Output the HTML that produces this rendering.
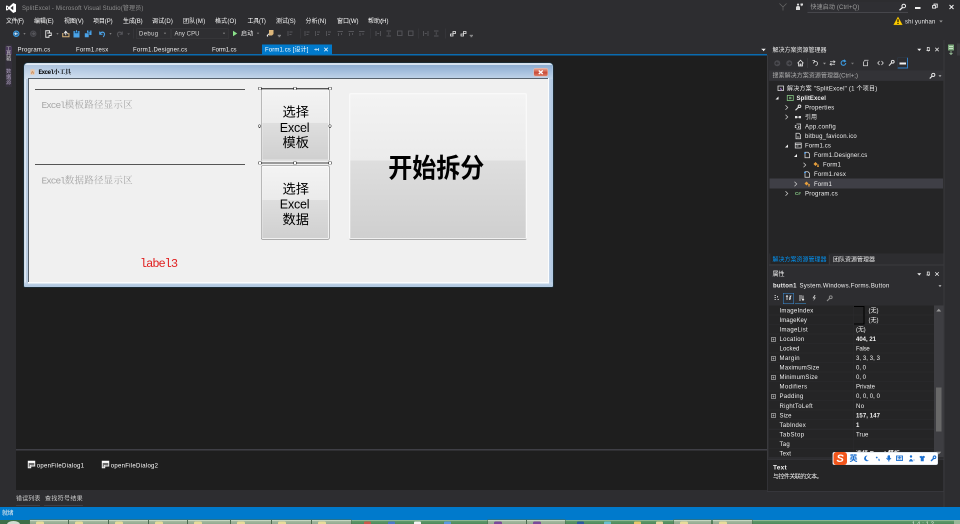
<!DOCTYPE html>
<html lang="zh-CN"><head><meta charset="utf-8"><title>SplitExcel - Microsoft Visual Studio</title>
<style>
html,body{margin:0;padding:0;background:#2d2d30;overflow:hidden;width:960px;height:524px}
#s{position:absolute;left:0;top:0;width:1920px;height:1048px;transform:scale(.5);transform-origin:0 0;font:12px/16px "Liberation Sans","Noto Sans CJK SC",sans-serif;color:#f1f1f1;overflow:hidden;background:#2d2d30;will-change:transform}
#s div,#s svg,#s span.t{position:absolute}
#s span.t{white-space:nowrap;display:block}
#s b{font-weight:bold}
</style></head>
<body><div id="s">
<div style="left:32px;top:110px;width:1502px;height:790px;background:#1e1e1e;"></div>
<div style="left:32px;top:897.6px;width:1502px;height:3.6px;background:#3f3f46;"></div>
<div style="left:32px;top:901px;width:1502px;height:79px;background:#1e1e1e;"></div>
<div style="left:1534px;top:110px;width:2px;height:870px;background:#3a3a3d;"></div>
<div style="left:32px;top:108.2px;width:1502px;height:2.4px;background:#0a6bb0;"></div>
<div style="left:524px;top:88.6px;width:140px;height:20.4px;background:#007acc;"></div>
<svg style="left:12px;top:6px;" width="20" height="20" viewBox="0 0 20 20"><path d="M14.5 0 L20 2.4 V17.6 L14.5 20 L6 12.3 L2 15.3 L0 14.3 V5.7 L2 4.7 L6 7.7 Z M14.5 5.6 L9 10 L14.5 14.4 Z M2 7.6 V12.4 L4.6 10 Z" fill="#fff" fill-rule="evenodd"/></svg>
<span class="t" style="left:44px;top:7.5px;color:#8e8e8e;letter-spacing:0.34px;">SplitExcel - Microsoft Visual Studio(管理员)</span>
<div style="left:1615px;top:4px;width:201px;height:21.4px;background:#2f2f33;"></div>
<div style="left:1615px;top:24px;width:201px;height:1.6px;background:#46464b;"></div>
<span class="t" style="left:1621px;top:6.1px;color:#a0a0a0;letter-spacing:0.28px;">快速启动 (Ctrl+Q)</span>
<svg style="left:1558px;top:6px;" width="16" height="16" viewBox="0 0 16 16"><path d="M1 1 L8 8 L15 1 M8 8 V15" stroke="#6a6a6a" stroke-width="1.3" fill="none"/></svg>
<svg style="left:1590px;top:6px;" width="16" height="16" viewBox="0 0 16 16"><path d="M2 14 V9 Q2 6 6 6 Q10 6 10 9 V14 Z M6 1 a2.2 2.2 0 1 0 .01 0 M11 1 h5 v4 h-2 l-1.5 2 v-2 h-1.5z" fill="#ddd"/></svg>
<svg style="left:1797px;top:7px;" width="16" height="14" viewBox="0 0 16 14"><circle cx="10.5" cy="5" r="3.6" stroke="#f1f1f1" stroke-width="2" fill="none"/><path d="M8 8 L2 13.5" stroke="#f1f1f1" stroke-width="2.6"/></svg>
<div style="left:1830px;top:13.6px;width:11px;height:4px;background:#f1f1f1;"></div>
<svg style="left:1863px;top:7px;" width="14" height="12" viewBox="0 0 14 12"><path d="M5 3 V1.2 H11.5 V7.5 H9.5" stroke="#f1f1f1" stroke-width="1.8" fill="none"/><rect x="2.2" y="4.2" width="6" height="5" stroke="#f1f1f1" stroke-width="1.8" fill="#2d2d30"/></svg>
<svg style="left:1898px;top:9px;" width="10" height="10" viewBox="0 0 10 10"><path d="M1 1 L9 9 M9 1 L1 9" stroke="#f1f1f1" stroke-width="2"/></svg>
<svg style="left:1787px;top:33px;" width="18" height="18" viewBox="0 0 18 18"><path d="M9 0.8 L17.6 16.6 H0.4 Z" fill="#ffcc00" stroke="#e8b800" stroke-width="0.8"/><path d="M9 5.5 V11.5 M9 13 V15" stroke="#000" stroke-width="2.2"/></svg>
<span class="t" style="left:1810px;top:34.9px;color:#ececec;letter-spacing:0.30px;">shi yunhan</span>
<svg style="left:1878px;top:40px;" width="8" height="6" viewBox="0 0 8 6"><path d="M0.5 1 L4 5 L7.5 1Z" fill="#999"/></svg>
<span class="t" style="left:12px;top:34.3px;color:#ffffff;letter-spacing:-0.87px;">文件(F)</span>
<span class="t" style="left:68px;top:34.3px;color:#ffffff;letter-spacing:-0.20px;">编辑(E)</span>
<span class="t" style="left:128px;top:34.3px;color:#ffffff;letter-spacing:-0.20px;">视图(V)</span>
<span class="t" style="left:186px;top:34.3px;color:#ffffff;letter-spacing:-0.20px;">项目(P)</span>
<span class="t" style="left:246px;top:34.3px;color:#ffffff;letter-spacing:-0.20px;">生成(B)</span>
<span class="t" style="left:304px;top:34.3px;color:#ffffff;letter-spacing:0.27px;">调试(D)</span>
<span class="t" style="left:366px;top:34.3px;color:#ffffff;letter-spacing:0.60px;">团队(M)</span>
<span class="t" style="left:430px;top:34.3px;color:#ffffff;letter-spacing:0.33px;">格式(O)</span>
<span class="t" style="left:495px;top:34.3px;color:#ffffff;letter-spacing:-0.67px;">工具(T)</span>
<span class="t" style="left:552px;top:34.3px;color:#ffffff;letter-spacing:-0.20px;">测试(S)</span>
<span class="t" style="left:611px;top:34.3px;color:#ffffff;letter-spacing:0.27px;">分析(N)</span>
<span class="t" style="left:674px;top:34.3px;color:#ffffff;letter-spacing:-0.07px;">窗口(W)</span>
<span class="t" style="left:736px;top:34.3px;color:#ffffff;letter-spacing:0.07px;">帮助(H)</span>
<svg style="left:26px;top:61px;" width="13" height="13" viewBox="0 0 13 13"><circle cx="6.5" cy="6.5" r="5.4" stroke="#3b9ae0" stroke-width="2.2" fill="#1b4f7a"/><path d="M9.6 6.5 H4 M6.4 3.8 L3.6 6.5 L6.4 9.2" stroke="#cfe6fa" stroke-width="1.8" fill="none"/></svg>
<svg style="left:46px;top:66px;" width="6" height="4" viewBox="0 0 6 4"><path d="M0.8 0.5 H5.2 L3 3.2Z" fill="#999"/></svg>
<svg style="left:60px;top:61px;" width="13" height="13" viewBox="0 0 13 13"><circle cx="6.5" cy="6.5" r="5.4" stroke="#4a4a50" stroke-width="2.2" fill="#38383c"/><path d="M3.4 6.5 H9 M6.6 3.8 L9.4 6.5 L6.6 9.2" stroke="#5a5a60" stroke-width="1.8" fill="none"/></svg>
<div style="left:80.6px;top:57px;width:1.2px;height:20px;background:#3d3d41;"></div>
<svg style="left:90px;top:60px;" width="14" height="16" viewBox="0 0 14 16"><path d="M1.5 1.5 H9 V6 H12.5 V11 H8 V14.5 H1.5 Z M4.5 6 H9" stroke="#e8e8e8" stroke-width="1.8" fill="none"/></svg>
<svg style="left:112px;top:66px;" width="6" height="4" viewBox="0 0 6 4"><path d="M0.8 0.5 H5.2 L3 3.2Z" fill="#999"/></svg>
<svg style="left:124px;top:60px;" width="16" height="16" viewBox="0 0 16 16"><path d="M1.5 6 V13.5 H14 V7.5 H11" stroke="#dcb67a" stroke-width="2" fill="none"/><path d="M4 7 L7.5 2.5 L11 7 M7.5 3 V10.5" stroke="#f1f1f1" stroke-width="1.8" fill="none"/></svg>
<svg style="left:146px;top:60px;" width="14" height="16" viewBox="0 0 14 16"><path d="M1 2 H13 V15 H1Z" fill="#4aa3e8"/><rect x="3.5" y="2" width="7" height="4.5" fill="#1b4f7a"/><rect x="6" y="0.5" width="2" height="4" fill="#4aa3e8"/></svg>
<svg style="left:168px;top:60px;" width="16" height="16" viewBox="0 0 16 16"><path d="M6 1 H15 V10 H6Z" fill="#4aa3e8"/><path d="M1 6 H10 V15 H1Z" fill="#4aa3e8" stroke="#2d2d30" stroke-width="1.2"/><rect x="8.5" y="1" width="4" height="3.5" fill="#1b4f7a"/></svg>
<svg style="left:196px;top:60px;" width="16" height="16" viewBox="0 0 16 16"><path d="M3.5 3 V8.5 H9 M3.8 8.2 Q7 2.5 11.5 5 Q15 8 10.5 14" stroke="#4aa3e8" stroke-width="2.2" fill="none"/></svg>
<svg style="left:218px;top:66px;" width="6" height="4" viewBox="0 0 6 4"><path d="M0.8 0.5 H5.2 L3 3.2Z" fill="#999"/></svg>
<svg style="left:232px;top:60px;" width="16" height="16" viewBox="0 0 16 16"><path d="M12.5 3 V8.5 H7 M12.2 8.2 Q9 2.5 4.5 5 Q1 8 5.5 14" stroke="#55555a" stroke-width="2.2" fill="none"/></svg>
<svg style="left:254px;top:66px;" width="6" height="4" viewBox="0 0 6 4"><path d="M0 0.5 H6 L3 4Z" fill="#5a5a5e"/></svg>
<div style="left:266px;top:57px;width:1.2px;height:20px;background:#3d3d41;"></div>
<div style="left:273px;top:57px;width:66px;height:19px;background:#2f2f32;border:1px solid #3c3c40;"></div>
<span class="t" style="left:278px;top:58.5px;color:#d8d8d8;letter-spacing:0.72px;">Debug</span>
<svg style="left:327px;top:65px;" width="6" height="4" viewBox="0 0 6 4"><path d="M0.8 0.5 H5.2 L3 3.2Z" fill="#999"/></svg>
<div style="left:343px;top:57px;width:112px;height:19px;background:#2f2f32;border:1px solid #3c3c40;"></div>
<span class="t" style="left:349px;top:58.5px;color:#d8d8d8;letter-spacing:0.09px;">Any CPU</span>
<svg style="left:445px;top:65px;" width="6" height="4" viewBox="0 0 6 4"><path d="M0.8 0.5 H5.2 L3 3.2Z" fill="#999"/></svg>
<svg style="left:465px;top:61px;" width="10" height="12" viewBox="0 0 10 12"><path d="M1 0.5 L9.5 6 L1 11.5Z" fill="#8ae28a"/></svg>
<span class="t" style="left:482px;top:58.5px;letter-spacing:0.49px;">启动</span>
<svg style="left:513px;top:65px;" width="6" height="4" viewBox="0 0 6 4"><path d="M0.8 0.5 H5.2 L3 3.2Z" fill="#999"/></svg>
<svg style="left:533px;top:59px;" width="16" height="16" viewBox="0 0 16 16"><path d="M5 1 H14 V9 L11 12 H5 Z" fill="#dcb67a"/><path d="M1 12.5 L5 8.5" stroke="#e8e8e8" stroke-width="1.8"/><circle cx="2" cy="13" r="1.3" fill="#f1f1f1"/></svg>
<svg style="left:555px;top:69px;" width="8" height="7" viewBox="0 0 8 7"><path d="M0.5 1.5 H7 M2 4.5 H5.5" stroke="#b8b8b8" stroke-width="1.4"/></svg>
<svg style="left:574px;top:60px;" width="14" height="14" viewBox="0 0 14 14"><path d="M2 2 V12 M5 4 H11 M5 9 H9" stroke="#55555a" stroke-width="1.8" fill="none"/></svg>
<div style="left:601px;top:57px;width:1.2px;height:20px;background:#3d3d41;"></div>
<svg style="left:608px;top:60px;" width="14" height="14" viewBox="0 0 14 14"><path d="M2 2 V12 M5 4 H11 M5 9 H9" stroke="#55555a" stroke-width="1.8" fill="none"/></svg>
<svg style="left:629px;top:60px;" width="14" height="14" viewBox="0 0 14 14"><path d="M2 2 V12 M5 4 H11 M5 9 H9" stroke="#55555a" stroke-width="1.8" fill="none"/></svg>
<svg style="left:651px;top:60px;" width="14" height="14" viewBox="0 0 14 14"><path d="M2 2 V12 M5 4 H11 M5 9 H9" stroke="#55555a" stroke-width="1.8" fill="none"/></svg>
<svg style="left:674px;top:60px;" width="14" height="14" viewBox="0 0 14 14"><path d="M1 3 H12 M3 6 V12 M9 6 V10" stroke="#55555a" stroke-width="1.8" fill="none"/></svg>
<svg style="left:696px;top:60px;" width="14" height="14" viewBox="0 0 14 14"><path d="M1 3 H12 M3 6 V12 M9 6 V10" stroke="#55555a" stroke-width="1.8" fill="none"/></svg>
<svg style="left:717px;top:60px;" width="14" height="14" viewBox="0 0 14 14"><path d="M1 3 H12 M3 6 V12 M9 6 V10" stroke="#55555a" stroke-width="1.8" fill="none"/></svg>
<div style="left:741px;top:57px;width:1.2px;height:20px;background:#3d3d41;"></div>
<svg style="left:750px;top:60px;" width="14" height="14" viewBox="0 0 14 14"><path d="M2 2 V12 M11 2 V12 M4.5 7 H8.5" stroke="#55555a" stroke-width="1.8" fill="none"/></svg>
<svg style="left:771px;top:60px;" width="14" height="14" viewBox="0 0 14 14"><path d="M2 2 H11 M2 12 H11 M6.5 4.5 V9.5" stroke="#55555a" stroke-width="1.8" fill="none"/></svg>
<svg style="left:793px;top:60px;" width="14" height="14" viewBox="0 0 14 14"><rect x="2" y="2" width="9" height="9" stroke="#55555a" stroke-width="1.8" fill="none"/></svg>
<svg style="left:815px;top:60px;" width="14" height="14" viewBox="0 0 14 14"><rect x="2" y="2" width="9" height="9" stroke="#55555a" stroke-width="1.8" fill="none"/></svg>
<div style="left:837px;top:57px;width:1.2px;height:20px;background:#3d3d41;"></div>
<svg style="left:845px;top:60px;" width="14" height="14" viewBox="0 0 14 14"><path d="M2 2 V12 M11 2 V12 M4.5 7 H8.5" stroke="#55555a" stroke-width="1.8" fill="none"/></svg>
<svg style="left:866px;top:60px;" width="14" height="14" viewBox="0 0 14 14"><path d="M2 2 H11 M2 12 H11 M6.5 4.5 V9.5" stroke="#55555a" stroke-width="1.8" fill="none"/></svg>
<div style="left:890px;top:57px;width:1.2px;height:20px;background:#3d3d41;"></div>
<svg style="left:899px;top:60px;" width="14" height="14" viewBox="0 0 14 14"><path d="M2 8 H7 V12 H2Z M7 3 H12 V7 H7Z" stroke="#e8e8e8" stroke-width="1.6" fill="none"/></svg>
<svg style="left:920px;top:60px;" width="14" height="14" viewBox="0 0 14 14"><path d="M2 8 H7 V12 H2Z M7 3 H12 V7 H7Z" stroke="#e8e8e8" stroke-width="1.6" fill="none"/></svg>
<svg style="left:939px;top:69px;" width="8" height="7" viewBox="0 0 8 7"><path d="M0.5 1.5 H7 M2 4.5 H5.5" stroke="#b8b8b8" stroke-width="1.4"/></svg>
<div style="left:11px;top:89px;width:12.6px;height:85px;background:#332f3a;"></div>
<div style="left:11px;top:93px;width:12.6px;height:16px;background:#4a3a5c;"></div>
<span class="t" style="left:0px;top:-8.5px;color:#c4c4c4;left:12px;top:92px;width:12px;font-size:10.5px;line-height:10px;white-space:normal;word-break:break-all;">工具箱</span>
<span class="t" style="left:0px;top:-8.5px;color:#b4a4c6;left:12px;top:137px;width:12px;font-size:10.5px;line-height:11px;white-space:normal;word-break:break-all;">数据源</span>
<span class="t" style="left:35px;top:90.9px;letter-spacing:0.46px;">Program.cs</span>
<span class="t" style="left:152px;top:90.9px;letter-spacing:0.43px;">Form1.resx</span>
<span class="t" style="left:266px;top:90.9px;letter-spacing:0.49px;">Form1.Designer.cs</span>
<span class="t" style="left:424px;top:90.9px;letter-spacing:-0.13px;">Form1.cs</span>
<span class="t" style="left:530px;top:90.9px;color:#ffffff;letter-spacing:0.23px;">Form1.cs [设计]</span>
<svg style="left:628px;top:94px;" width="10" height="10" viewBox="0 0 10 10"><path d="M9 2 V8 M9 5 H4 M4 2.5 V7.5 M4 5 H0.5" stroke="#d0e6f5" stroke-width="1.4" fill="none"/></svg>
<svg style="left:647px;top:94px;" width="10" height="10" viewBox="0 0 10 10"><path d="M1.5 1.5 L8.5 8.5 M8.5 1.5 L1.5 8.5" stroke="#fff" stroke-width="1.6"/></svg>
<svg style="left:1522px;top:97px;" width="10" height="6" viewBox="0 0 10 6"><path d="M0.5 0.5 H9.5 L5 5.5Z" fill="#f1f1f1"/></svg>
<div style="left:48px;top:126px;width:1058px;height:448px;background:#b6cadf;border-radius:7px 7px 2px 2px;box-shadow:0 0 0 1px #1a3a4a;"></div>
<div style="left:49px;top:127px;width:1056px;height:31px;border-radius:6px 6px 0 0;background:linear-gradient(90deg,rgba(255,255,255,.32) 0,rgba(255,255,255,.12) 30%,rgba(255,255,255,0) 60%),linear-gradient(#eef4fa 0,#eef4fa 2px,#8dadd1 3px,#a6c0de 55%,#c0d4e9 100%);"></div>
<div style="left:49px;top:158px;width:8px;height:414px;background:linear-gradient(90deg,#e8eff7 0,#e8eff7 2px,#bacde2 3px,#b6cadf);"></div>
<div style="left:1097px;top:158px;width:8px;height:414px;background:linear-gradient(90deg,#c4d5e8,#aec6e2);"></div>
<div style="left:49px;top:565px;width:1056px;height:8px;background:linear-gradient(#c4d5e8,#aec6e0);"></div>
<div style="left:56px;top:156px;width:1042px;height:411px;background:#fbfdfe;"></div>
<div style="left:56px;top:156px;width:1040px;height:408px;background:#56616c;"></div>
<div style="left:57.5px;top:157.5px;width:1038.5px;height:406.5px;background:#f0f0f0;"></div>
<svg style="left:59px;top:138px;" width="12" height="12" viewBox="0 0 12 12"><rect x="1.5" y="0.5" width="9" height="11" rx="2" fill="#e6c8ae"/><path d="M4 9.5 Q6 1 8 9.5" stroke="#c98a5a" stroke-width="1.8" fill="none"/></svg>
<span class="t" style="left:77px;top:136.9px;color:#000;font-family:'Liberation Mono','Noto Serif CJK SC',serif;letter-spacing:-0.50px;font-weight:bold;"><span style="letter-spacing:-1.2px">Excel</span>小工具</span>
<div style="left:1068px;top:137px;width:27px;height:15px;border-radius:3px;background:linear-gradient(#e8a898,#d05a44 45%,#c84a38 55%,#dd8068);box-shadow:0 0 0 1px #e8c0b4;"></div>
<svg style="left:1075px;top:139px;" width="13" height="11" viewBox="0 0 13 11"><path d="M2.5 2 L10.5 9 M10.5 2 L2.5 9" stroke="#fff" stroke-width="2.6"/></svg>
<div style="left:70px;top:178px;width:420px;height:1.6px;background:#555;"></div>
<div style="left:70px;top:328px;width:420px;height:1.6px;background:#555;"></div>
<span class="t" style="left:83px;top:198.3px;color:#a6a6a6;font-size:19px;line-height:27px;font-family:'Liberation Mono','Noto Serif CJK SC',serif;letter-spacing:0.46px;"><span style="letter-spacing:-2.1px">Excel</span>模板路径显示区</span>
<span class="t" style="left:83px;top:348.9px;color:#a6a6a6;font-size:19px;line-height:27px;font-family:'Liberation Mono','Noto Serif CJK SC',serif;letter-spacing:0.46px;"><span style="letter-spacing:-2.1px">Excel</span>数据路径显示区</span>
<span class="t" style="left:280px;top:511.4px;color:#e02020;font-size:24px;line-height:34px;font-family:'Liberation Mono','Noto Serif CJK SC',serif;letter-spacing:-2.07px;">label3</span>
<div style="left:522px;top:178px;width:135px;height:142.4px;border:1px solid #757575;border-bottom-color:#c4c4c4;border-radius:3px;box-shadow:inset 0 0 0 1.5px #fbfbfb;background:linear-gradient(#f3f3f3 0,#ebebeb 67px,#dedede 67px,#cfcfcf 100%);"></div>
<div style="left:522px;top:331.2px;width:135px;height:145.8px;border:1px solid #757575;border-bottom-color:#666;border-radius:3px;box-shadow:inset 0 0 0 1.5px #fbfbfb;background:linear-gradient(#f3f3f3 0,#ebebeb 67.8px,#dedede 67.8px,#cfcfcf 100%);"></div>
<div style="left:698px;top:186px;width:354px;height:291px;border:1px solid #f6f6f6;border-bottom-color:#666;border-radius:3px;box-shadow:inset 0 0 0 1.5px #fbfbfb;background:linear-gradient(#f3f3f3 0,#ebebeb 133.6px,#dedede 133.6px,#cfcfcf 100%);"></div>
<span class="t" style="left:491.4px;top:207.4px;width:200px;text-align:center;color:#000;font-size:26.5px;line-height:34px;">选择</span>
<span class="t" style="left:489.2px;top:239.2px;width:200px;text-align:center;color:#000;font-size:25px;line-height:32px;letter-spacing:-0.4px;">Excel</span>
<span class="t" style="left:491.4px;top:268px;width:200px;text-align:center;color:#000;font-size:26.5px;line-height:34px;">模板</span>
<span class="t" style="left:491.4px;top:361.2px;width:200px;text-align:center;color:#000;font-size:26.5px;line-height:34px;">选择</span>
<span class="t" style="left:489.2px;top:392.4px;width:200px;text-align:center;color:#000;font-size:25px;line-height:32px;letter-spacing:-0.4px;">Excel</span>
<span class="t" style="left:491.4px;top:421.8px;width:200px;text-align:center;color:#000;font-size:26.5px;line-height:34px;">数据</span>
<span class="t" style="left:672.6px;top:306.2px;width:400px;text-align:center;color:#000;font-size:48px;line-height:62px;font-weight:bold;transform:scaleY(1.11);">开始拆分</span>
<div style="left:522px;top:176.4px;width:137px;height:1.6px;background:#555;"></div>
<div style="left:522px;top:325.4px;width:137px;height:1.4px;background:#444;"></div>
<div style="left:516.5px;top:173.7px;width:4px;height:4px;background:#fff;border:1.5px solid #111;border-top-color:#555;border-bottom-color:#888;"></div>
<div style="left:516.5px;top:322.7px;width:4px;height:4px;background:#fff;border:1.5px solid #111;border-top-color:#555;border-bottom-color:#888;"></div>
<div style="left:586.5px;top:173.7px;width:4px;height:4px;background:#fff;border:1.5px solid #111;border-top-color:#555;border-bottom-color:#888;"></div>
<div style="left:586.5px;top:322.7px;width:4px;height:4px;background:#fff;border:1.5px solid #111;border-top-color:#555;border-bottom-color:#888;"></div>
<div style="left:656.5px;top:173.7px;width:4px;height:4px;background:#fff;border:1.5px solid #111;border-top-color:#555;border-bottom-color:#888;"></div>
<div style="left:656.5px;top:322.7px;width:4px;height:4px;background:#fff;border:1.5px solid #111;border-top-color:#555;border-bottom-color:#888;"></div>
<div style="left:516.1px;top:248.5px;width:4px;height:4px;background:#fff;border:1.8px solid #222;border-radius:50%;"></div>
<div style="left:657.3px;top:248.5px;width:4px;height:4px;background:#fff;border:1.8px solid #222;border-radius:50%;"></div>
<div style="left:1887.2px;top:80px;width:1.4px;height:934px;background:#38383c;"></div>
<span class="t" style="left:1545px;top:92.1px;">解决方案资源管理器</span>
<svg style="left:1834px;top:97px;" width="10" height="6" viewBox="0 0 10 6"><path d="M0.5 0.5 H8.5 L4.5 5Z" fill="#f1f1f1"/></svg>
<svg style="left:1851px;top:93px;" width="10" height="10" viewBox="0 0 10 10"><path d="M2 8 H9 M3.5 8 V2 H7.5 V8 M5.5 8 V10" stroke="#f1f1f1" stroke-width="1.4" fill="none"/></svg>
<svg style="left:1869px;top:94px;" width="10" height="10" viewBox="0 0 10 10"><path d="M1.5 1.5 L8.5 8.5 M8.5 1.5 L1.5 8.5" stroke="#f1f1f1" stroke-width="1.5"/></svg>
<svg style="left:1894px;top:88px;" width="16" height="22" viewBox="0 0 16 22"><rect x="2" y="1" width="12" height="12" rx="1" fill="#7aa87a"/><path d="M4 5 H12 M4 9 H12" stroke="#dfeedd" stroke-width="1.6"/><path d="M8 14 V21 M5 18 L8 21 L11 18" stroke="#9fc79f" stroke-width="1.6" fill="none"/></svg>
<div style="left:1914px;top:87px;width:6px;height:24px;background:#3a3a3e;"></div>
<svg style="left:1548px;top:120px;" width="13" height="13" viewBox="0 0 13 13"><circle cx="6.5" cy="6.5" r="6" fill="#4a4a4f"/><path d="M9.6 6.5 H4 M6.4 3.8 L3.6 6.5 L6.4 9.2" stroke="#2d2d30" stroke-width="1.8" fill="none"/></svg>
<svg style="left:1572px;top:120px;" width="13" height="13" viewBox="0 0 13 13"><circle cx="6.5" cy="6.5" r="6" fill="#4a4a4f"/><path d="M3.4 6.5 H9 M6.6 3.8 L9.4 6.5 L6.6 9.2" stroke="#2d2d30" stroke-width="1.8" fill="none"/></svg>
<svg style="left:1594px;top:119px;" width="14" height="14" viewBox="0 0 14 14"><path d="M1 7.5 L7 1.5 L13 7.5 M3 6.5 V13 H11 V6.5 M6 13 V9 H8 V13" stroke="#e0e0e0" stroke-width="1.7" fill="none"/></svg>
<div style="left:1615px;top:116px;width:1.2px;height:20px;background:#46464a;"></div>
<svg style="left:1624px;top:119px;" width="14" height="14" viewBox="0 0 14 14"><path d="M3 8 A4 4 0 1 1 7 12 M1 2 H5 V6" stroke="#d8d8d8" stroke-width="1.7" fill="none"/></svg>
<svg style="left:1646px;top:125px;" width="6" height="4" viewBox="0 0 6 4"><path d="M0 0.5 H6 L3 4Z" fill="#999"/></svg>
<svg style="left:1658px;top:119px;" width="14" height="14" viewBox="0 0 14 14"><path d="M2 4.5 H12 M9 2 L12 4.5 L9 7 M12 9.5 H2 M5 7 L2 9.5 L5 12" stroke="#d8d8d8" stroke-width="1.6" fill="none"/></svg>
<svg style="left:1680px;top:119px;" width="14" height="14" viewBox="0 0 14 14"><path d="M11.5 7 A4.6 4.6 0 1 1 9.5 3.2 M8 0.5 L11 3.2 L7.5 5" stroke="#3b9ae0" stroke-width="2.1" fill="none"/></svg>
<svg style="left:1702px;top:125px;" width="6" height="4" viewBox="0 0 6 4"><path d="M0 0.5 H6 L3 4Z" fill="#777"/></svg>
<svg style="left:1724px;top:119px;" width="14" height="14" viewBox="0 0 14 14"><path d="M3 4 V12.5 H11 V4 M5.5 4 V1.5 H13" stroke="#d8d8d8" stroke-width="1.6" fill="none"/></svg>
<svg style="left:1754px;top:120px;" width="14" height="12" viewBox="0 0 14 12"><path d="M5 2 L1.5 6 L5 10 M9 2 L12.5 6 L9 10" stroke="#d8d8d8" stroke-width="1.6" fill="none"/></svg>
<svg style="left:1776px;top:119px;" width="14" height="14" viewBox="0 0 14 14"><path d="M2 12 L7.5 6.5" stroke="#e0e0e0" stroke-width="2.4"/><circle cx="9.5" cy="4.5" r="2.8" stroke="#e0e0e0" stroke-width="2" fill="none"/></svg>
<div style="left:1795px;top:115px;width:21px;height:22px;border-right:2px solid #2f7fc8;border-bottom:2px solid #2f7fc8;border-top:1px solid #2f3d4c;border-left:1px solid #2f3d4c;box-sizing:border-box;"></div>
<div style="left:1798.6px;top:125.2px;width:13.8px;height:3.4px;background:#f1f1f1;"></div>
<div style="left:1538px;top:141px;width:348px;height:20px;background:#333337;"></div>
<span class="t" style="left:1545px;top:142.9px;color:#b0b0b0;letter-spacing:0.11px;">搜索解决方案资源管理器(Ctrl+;)</span>
<svg style="left:1858px;top:145px;" width="13" height="13" viewBox="0 0 13 13"><circle cx="8.5" cy="4.8" r="3.2" stroke="#f1f1f1" stroke-width="1.8" fill="none"/><path d="M6.3 7.3 L1.5 12" stroke="#f1f1f1" stroke-width="2.3"/></svg>
<svg style="left:1877px;top:150px;" width="6" height="4" viewBox="0 0 6 4"><path d="M0 0.5 H6 L3 4Z" fill="#bbb"/></svg>
<div style="left:1538px;top:162px;width:349px;height:345px;background:#252526;"></div>
<div style="left:1541px;top:507px;width:116px;height:21px;background:#252526;"></div>
<div style="left:1538px;top:528.6px;width:349px;height:2px;background:#3a3a3e;"></div>
<div style="left:1539px;top:357.4px;width:347px;height:19.4px;background:#3f3f46;"></div>
<svg style="left:1553.6px;top:169.6px;" width="15" height="15" viewBox="0 0 15 15"><path d="M2 2 H13 V11 H2Z" stroke="#e0e0e0" stroke-width="1.6" fill="none"/><path d="M6 6 L9 8.5 L6 11" stroke="#b180d7" stroke-width="1.6" fill="none"/></svg>
<span class="t" style="left:1574px;top:168.5px;letter-spacing:0.44px;">解决方案 "SplitExcel" (1 个项目)</span>
<svg style="left:1549px;top:191.1px;" width="10" height="10" viewBox="0 0 10 10"><path d="M8 2 V8 H2Z" fill="#f1f1f1"/></svg>
<svg style="left:1572.6px;top:188.7px;" width="15" height="15" viewBox="0 0 15 15"><rect x="1.5" y="2" width="12" height="10" stroke="#8dd28a" stroke-width="1.5" fill="none"/><path d="M5 5.5 H10 M5 8.5 H10" stroke="#8dd28a" stroke-width="1.3"/></svg>
<span class="t" style="left:1593px;top:187.6px;font-weight:bold;letter-spacing:0.16px;">SplitExcel</span>
<svg style="left:1568px;top:209.2px;" width="10" height="12" viewBox="0 0 10 12"><path d="M3 1.5 L7.5 6 L3 10.5" stroke="#c8c8c8" stroke-width="1.5" fill="none"/></svg>
<svg style="left:1588.6px;top:207.8px;" width="15" height="15" viewBox="0 0 15 15"><path d="M2 12.5 L8 6.5" stroke="#e0e0e0" stroke-width="2.4"/><circle cx="10" cy="4.5" r="2.6" stroke="#e0e0e0" stroke-width="2" fill="none"/></svg>
<span class="t" style="left:1610px;top:206.7px;letter-spacing:0.43px;">Properties</span>
<svg style="left:1568px;top:228.3px;" width="10" height="12" viewBox="0 0 10 12"><path d="M3 1.5 L7.5 6 L3 10.5" stroke="#c8c8c8" stroke-width="1.5" fill="none"/></svg>
<svg style="left:1588.6px;top:226.9px;" width="15" height="15" viewBox="0 0 15 15"><rect x="1" y="5" width="4.5" height="4.5" fill="#e0e0e0"/><rect x="8.5" y="5" width="4.5" height="4.5" fill="#e0e0e0"/><path d="M5 7.2 H9" stroke="#e0e0e0" stroke-width="1.2"/></svg>
<span class="t" style="left:1610px;top:225.8px;">引用</span>
<svg style="left:1588.6px;top:246px;" width="15" height="15" viewBox="0 0 15 15"><path d="M4 2 H12 V12 H4 M4 5 H1.5 V9 H4" stroke="#e0e0e0" stroke-width="1.5" fill="none"/><path d="M7 5.5 L9.5 7.5 L7 9.5" stroke="#e0e0e0" stroke-width="1.3" fill="none"/></svg>
<span class="t" style="left:1610px;top:244.9px;letter-spacing:0.53px;">App.config</span>
<svg style="left:1588.6px;top:265.1px;" width="15" height="15" viewBox="0 0 15 15"><path d="M3 1.5 H9 L12 4.5 V12.5 H3Z" stroke="#e0e0e0" stroke-width="1.5" fill="none"/><path d="M5 9 H10" stroke="#e0e0e0" stroke-width="1.3"/></svg>
<span class="t" style="left:1610px;top:264px;letter-spacing:0.44px;">bitbug_favicon.ico</span>
<svg style="left:1568px;top:286.6px;" width="10" height="10" viewBox="0 0 10 10"><path d="M8 2 V8 H2Z" fill="#f1f1f1"/></svg>
<svg style="left:1588.6px;top:284.2px;" width="15" height="15" viewBox="0 0 15 15"><rect x="1.5" y="2" width="12" height="10" stroke="#e0e0e0" stroke-width="1.5" fill="none"/><path d="M1.5 4.8 H13.5 M4 8 H8" stroke="#e0e0e0" stroke-width="1.4"/></svg>
<span class="t" style="left:1610px;top:283.1px;letter-spacing:0.25px;">Form1.cs</span>
<svg style="left:1586px;top:305.7px;" width="10" height="10" viewBox="0 0 10 10"><path d="M8 2 V8 H2Z" fill="#f1f1f1"/></svg>
<svg style="left:1606.6px;top:303.3px;" width="15" height="15" viewBox="0 0 15 15"><path d="M3 1.5 H9 L12 4.5 V12.5 H3Z" stroke="#e0e0e0" stroke-width="1.5" fill="none"/><path d="M1 3 H5 M3 1 V5" stroke="#55aaff" stroke-width="1.4"/></svg>
<span class="t" style="left:1628px;top:302.2px;letter-spacing:0.37px;">Form1.Designer.cs</span>
<svg style="left:1604px;top:323.8px;" width="10" height="12" viewBox="0 0 10 12"><path d="M3 1.5 L7.5 6 L3 10.5" stroke="#c8c8c8" stroke-width="1.5" fill="none"/></svg>
<svg style="left:1624.6px;top:322.4px;" width="15" height="15" viewBox="0 0 15 15"><path d="M2 6 L6 2 L10 6 L6 10Z" fill="#e8a03c"/><path d="M9 8 H13 M9 11 H13 M11 8 V11" stroke="#e8a03c" stroke-width="1.6"/></svg>
<span class="t" style="left:1646px;top:321.3px;letter-spacing:0.27px;">Form1</span>
<svg style="left:1606.6px;top:341.5px;" width="15" height="15" viewBox="0 0 15 15"><path d="M3 1.5 H9 L12 4.5 V12.5 H3Z" stroke="#e0e0e0" stroke-width="1.5" fill="none"/><path d="M1 3 H5 M3 1 V5" stroke="#55aaff" stroke-width="1.4"/></svg>
<span class="t" style="left:1628px;top:340.4px;letter-spacing:0.33px;">Form1.resx</span>
<svg style="left:1586px;top:362px;" width="10" height="12" viewBox="0 0 10 12"><path d="M3 1.5 L7.5 6 L3 10.5" stroke="#c8c8c8" stroke-width="1.5" fill="none"/></svg>
<svg style="left:1606.6px;top:360.6px;" width="15" height="15" viewBox="0 0 15 15"><path d="M2 6 L6 2 L10 6 L6 10Z" fill="#e8a03c"/><path d="M9 8 H13 M9 11 H13 M11 8 V11" stroke="#e8a03c" stroke-width="1.6"/></svg>
<span class="t" style="left:1628px;top:359.5px;letter-spacing:0.27px;">Form1</span>
<svg style="left:1568px;top:381.1px;" width="10" height="12" viewBox="0 0 10 12"><path d="M3 1.5 L7.5 6 L3 10.5" stroke="#c8c8c8" stroke-width="1.5" fill="none"/></svg>
<svg style="left:1588.6px;top:379.7px;" width="15" height="15" viewBox="0 0 15 15"><text x="1" y="10" font-size="9" font-weight="bold" fill="#8dd28a" font-family="Liberation Sans, sans-serif">C#</text></svg>
<span class="t" style="left:1610px;top:378.6px;letter-spacing:0.46px;">Program.cs</span>
<span class="t" style="left:1545px;top:510.5px;color:#0097fb;">解决方案资源管理器</span>
<div style="left:1659px;top:510px;width:1px;height:19px;background:#46464a;"></div>
<span class="t" style="left:1666px;top:510.5px;">团队资源管理器</span>
<span class="t" style="left:1545px;top:539.9px;">属性</span>
<svg style="left:1834px;top:546px;" width="10" height="6" viewBox="0 0 10 6"><path d="M0.5 0.5 H8.5 L4.5 5Z" fill="#f1f1f1"/></svg>
<svg style="left:1851px;top:542px;" width="10" height="10" viewBox="0 0 10 10"><path d="M2 8 H9 M3.5 8 V2 H7.5 V8 M5.5 8 V10" stroke="#f1f1f1" stroke-width="1.4" fill="none"/></svg>
<svg style="left:1869px;top:543px;" width="10" height="10" viewBox="0 0 10 10"><path d="M1.5 1.5 L8.5 8.5 M8.5 1.5 L1.5 8.5" stroke="#f1f1f1" stroke-width="1.5"/></svg>
<span class="t" style="left:1546px;top:562.9px;letter-spacing:0.47px;"><b style="margin-right:2px">button1</b> System.Windows.Forms.Button</span>
<svg style="left:1877px;top:570px;" width="6" height="4" viewBox="0 0 6 4"><path d="M0 0.5 H6 L3 4Z" fill="#ccc"/></svg>
<svg style="left:1547px;top:589px;" width="14" height="14" viewBox="0 0 14 14"><path d="M2 2 H5 M2 6 H5 M2 10 H5 M8 3 V6 M8 10 H11" stroke="#e0e0e0" stroke-width="1.7" fill="none"/></svg>
<div style="left:1566px;top:586px;width:22px;height:22px;border:1.5px solid #3b8fd8;box-sizing:border-box;background:#2a2d33"></div>
<svg style="left:1571px;top:589px;" width="14" height="14" viewBox="0 0 14 14"><path d="M3 2 V11 M1 4 L3 2 L5 4 M8 3 H11 L8 7 H11 M8 11 V9 H11" stroke="#f1f1f1" stroke-width="1.5" fill="none"/></svg>
<div style="left:1590px;top:586px;width:22px;height:22px;border-bottom:1.5px solid #3b9ae0;box-sizing:border-box;"></div>
<svg style="left:1596px;top:589px;" width="14" height="14" viewBox="0 0 14 14"><path d="M2 3 H8 M2 7 H8 M2 11 H6 M10 2 V12 M8 9 L10 12 L12 9" stroke="#f1f1f1" stroke-width="1.5" fill="none"/></svg>
<svg style="left:1622px;top:589px;" width="12" height="14" viewBox="0 0 12 14"><path d="M7 1 L3 7.5 H6.5 L4.5 13 L10 6 H6.5 L9 1Z" fill="#c8c8c8"/></svg>
<svg style="left:1652px;top:590px;" width="14" height="14" viewBox="0 0 14 14"><path d="M2 12 L7.5 6.5" stroke="#8c8c8c" stroke-width="2.4"/><circle cx="9.5" cy="4.5" r="2.8" stroke="#8c8c8c" stroke-width="2" fill="none"/></svg>
<div style="left:1538px;top:611px;width:330px;height:303px;background:#252526;"></div>
<div style="left:1538px;top:611px;width:330px;height:303px;background:repeating-linear-gradient(to bottom,transparent 0,transparent 18px,#2c2c2f 18px,#2c2c2f 19.04px);background-position:0 0.5px;"></div>
<div style="left:1707px;top:611px;width:1px;height:303px;background:#2b2b2d;"></div>
<span class="t" style="left:1559px;top:613.1px;letter-spacing:0.53px;">ImageIndex</span>
<span class="t" style="left:1559px;top:632.14px;letter-spacing:0.12px;">ImageKey</span>
<span class="t" style="left:1559px;top:651.18px;letter-spacing:0.55px;">ImageList</span>
<span class="t" style="left:1712px;top:651.18px;letter-spacing:-0.33px;">(无)</span>
<span class="t" style="left:1559px;top:670.22px;letter-spacing:0.58px;">Location</span>
<span class="t" style="left:1712px;top:670.22px;font-weight:bold;">404, 21</span>
<svg style="left:1542px;top:673.72px;" width="10" height="10" viewBox="0 0 10 10"><rect x="1" y="1" width="8" height="8" stroke="#c8c8c8" stroke-width="1.2" fill="none"/><path d="M3 5 H7 M5 3 V7" stroke="#c8c8c8" stroke-width="1.2"/></svg>
<span class="t" style="left:1559px;top:689.26px;letter-spacing:0.22px;">Locked</span>
<span class="t" style="left:1712px;top:689.26px;letter-spacing:-0.47px;">False</span>
<span class="t" style="left:1559px;top:708.3px;letter-spacing:0.72px;">Margin</span>
<span class="t" style="left:1712px;top:708.3px;letter-spacing:0.13px;">3, 3, 3, 3</span>
<svg style="left:1542px;top:711.8px;" width="10" height="10" viewBox="0 0 10 10"><rect x="1" y="1" width="8" height="8" stroke="#c8c8c8" stroke-width="1.2" fill="none"/><path d="M3 5 H7 M5 3 V7" stroke="#c8c8c8" stroke-width="1.2"/></svg>
<span class="t" style="left:1559px;top:727.34px;letter-spacing:0.42px;">MaximumSize</span>
<span class="t" style="left:1712px;top:727.34px;">0, 0</span>
<span class="t" style="left:1559px;top:746.38px;letter-spacing:0.45px;">MinimumSize</span>
<span class="t" style="left:1712px;top:746.38px;">0, 0</span>
<svg style="left:1542px;top:749.88px;" width="10" height="10" viewBox="0 0 10 10"><rect x="1" y="1" width="8" height="8" stroke="#c8c8c8" stroke-width="1.2" fill="none"/><path d="M3 5 H7 M5 3 V7" stroke="#c8c8c8" stroke-width="1.2"/></svg>
<span class="t" style="left:1559px;top:765.42px;letter-spacing:0.81px;">Modifiers</span>
<span class="t" style="left:1712px;top:765.42px;letter-spacing:0.09px;">Private</span>
<span class="t" style="left:1559px;top:784.46px;letter-spacing:0.56px;">Padding</span>
<span class="t" style="left:1712px;top:784.46px;letter-spacing:0.13px;">0, 0, 0, 0</span>
<svg style="left:1542px;top:787.96px;" width="10" height="10" viewBox="0 0 10 10"><rect x="1" y="1" width="8" height="8" stroke="#c8c8c8" stroke-width="1.2" fill="none"/><path d="M3 5 H7 M5 3 V7" stroke="#c8c8c8" stroke-width="1.2"/></svg>
<span class="t" style="left:1559px;top:803.5px;letter-spacing:0.57px;">RightToLeft</span>
<span class="t" style="left:1712px;top:803.5px;letter-spacing:0.83px;">No</span>
<span class="t" style="left:1559px;top:822.54px;letter-spacing:0.16px;">Size</span>
<span class="t" style="left:1712px;top:822.54px;font-weight:bold;letter-spacing:0.16px;">157, 147</span>
<svg style="left:1542px;top:826.04px;" width="10" height="10" viewBox="0 0 10 10"><rect x="1" y="1" width="8" height="8" stroke="#c8c8c8" stroke-width="1.2" fill="none"/><path d="M3 5 H7 M5 3 V7" stroke="#c8c8c8" stroke-width="1.2"/></svg>
<span class="t" style="left:1559px;top:841.58px;letter-spacing:0.54px;">TabIndex</span>
<span class="t" style="left:1712px;top:841.58px;font-weight:bold;letter-spacing:-0.69px;">1</span>
<span class="t" style="left:1559px;top:860.62px;letter-spacing:0.85px;">TabStop</span>
<span class="t" style="left:1712px;top:860.62px;letter-spacing:0.19px;">True</span>
<span class="t" style="left:1559px;top:879.66px;letter-spacing:0.55px;">Tag</span>
<span class="t" style="left:1559px;top:898.7px;letter-spacing:0.25px;">Text</span>
<span class="t" style="left:1712px;top:898.7px;font-weight:bold;letter-spacing:0.18px;">选择 Excel 模板</span>
<div style="left:1708px;top:611.5px;width:19px;height:33px;border:2px solid #000;border-left:none;"></div>
<span class="t" style="left:1737px;top:613.1px;">(无)</span>
<span class="t" style="left:1737px;top:632.14px;">(无)</span>
<div style="left:1868px;top:611px;width:19px;height:303px;background:#3e3e42;"></div>
<svg style="left:1872px;top:617px;" width="11" height="7" viewBox="0 0 11 7"><path d="M0.5 6 L5.5 0.5 L10.5 6Z" fill="#999"/></svg>
<svg style="left:1872px;top:903px;" width="11" height="7" viewBox="0 0 11 7"><path d="M0.5 0.5 L5.5 6 L10.5 0.5Z" fill="#999"/></svg>
<div style="left:1872px;top:775.4px;width:10.6px;height:87.6px;background:#686868;"></div>
<div style="left:1534px;top:918px;width:352px;height:63px;background:#252526;border:1px solid #3f3f46;"></div>
<span class="t" style="left:1546px;top:925.6px;font-size:13px;line-height:18px;font-weight:bold;letter-spacing:0.56px;">Text</span>
<span class="t" style="left:1546px;top:944.9px;letter-spacing:-1.11px;">与控件关联的文本。</span>
<div style="left:1666px;top:904.5px;width:209px;height:24px;background:#fff;border-radius:3px;box-shadow:0 0 0 1px #c8d4e0;"></div>
<div style="left:1667px;top:903.5px;width:27px;height:26px;background:#f2561c;border-radius:6px;"></div>
<span class="t" style="left:1673px;top:901.3px;color:#fff;font-size:22px;line-height:31px;font-weight:bold;font-style:italic;">S</span>
<span class="t" style="left:1699px;top:905.8px;color:#1a6fd0;font-size:16px;line-height:22px;font-weight:bold;letter-spacing:1.98px;">英</span>
<svg style="left:1727px;top:909.6px;" width="14" height="14" viewBox="0 0 14 14"><path d="M8 1.5 A5.5 5.5 0 1 0 11 10.5 A4.5 4.5 0 0 1 8 1.5Z" fill="#1a6fd0"/></svg>
<svg style="left:1749px;top:909.6px;" width="14" height="14" viewBox="0 0 14 14"><circle cx="4.5" cy="5" r="1.8" fill="#1a6fd0"/><path d="M8 8 Q10 9 9 12" stroke="#1a6fd0" stroke-width="2" fill="none"/></svg>
<svg style="left:1771px;top:909.6px;" width="14" height="14" viewBox="0 0 14 14"><rect x="4" y="0.5" width="5" height="8" rx="2.5" fill="#1a6fd0"/><path d="M2 6 Q6.5 13 11 6 M6.5 10 V13" stroke="#1a6fd0" stroke-width="1.6" fill="none"/></svg>
<svg style="left:1792px;top:909.6px;" width="14" height="14" viewBox="0 0 14 14"><rect x="1" y="2" width="12" height="9" stroke="#1a6fd0" stroke-width="1.8" fill="none"/><path d="M3 5 H11 M3 8 H11 M7 2 V8" stroke="#1a6fd0" stroke-width="1.3"/></svg>
<svg style="left:1816px;top:909.6px;" width="14" height="14" viewBox="0 0 14 14"><circle cx="6" cy="3" r="2.4" fill="#1a6fd0"/><path d="M1.5 13 Q6 3 10.5 13Z" fill="#1a6fd0"/><path d="M11 10 h2" stroke="#1a6fd0" stroke-width="1.5"/></svg>
<svg style="left:1838px;top:909.6px;" width="14" height="14" viewBox="0 0 14 14"><path d="M1 3 L4.5 1.5 Q6.5 4 8.5 1.5 L12 3 L11 6 L9.5 5.5 V12.5 H3.5 V5.5 L2 6Z" fill="#1a6fd0"/></svg>
<svg style="left:1860px;top:909.6px;" width="14" height="14" viewBox="0 0 14 14"><path d="M2 12 L7.5 6.5" stroke="#1a6fd0" stroke-width="2.8"/><circle cx="9" cy="4.5" r="2.6" stroke="#1a6fd0" stroke-width="2.2" fill="none"/></svg>
<svg style="left:55.4px;top:921.2px;" width="16" height="16" viewBox="0 0 16 16"><path d="M1.5 1.5 H14.5 V11 H6.5 V14.5 H1.5Z" stroke="#f4f4f4" stroke-width="1.8" fill="#6a6a6a"/><path d="M1.5 3.2 H14.5" stroke="#ffffff" stroke-width="3.2"/><path d="M4 12 L7 9" stroke="#f1f1f1" stroke-width="1.4"/></svg>
<span class="t" style="left:73.6px;top:922.7px;color:#ffffff;letter-spacing:0.55px;">openFileDialog1</span>
<svg style="left:203.4px;top:921.2px;" width="16" height="16" viewBox="0 0 16 16"><path d="M1.5 1.5 H14.5 V11 H6.5 V14.5 H1.5Z" stroke="#f4f4f4" stroke-width="1.8" fill="#6a6a6a"/><path d="M1.5 3.2 H14.5" stroke="#ffffff" stroke-width="3.2"/><path d="M4 12 L7 9" stroke="#f1f1f1" stroke-width="1.4"/></svg>
<span class="t" style="left:221.6px;top:922.7px;color:#ffffff;letter-spacing:0.55px;">openFileDialog2</span>
<span class="t" style="left:32px;top:989.1px;color:#d0d0d0;letter-spacing:0.25px;">错误列表</span>
<span class="t" style="left:90px;top:989.1px;color:#d0d0d0;letter-spacing:0.66px;">查找符号结果</span>
<div style="left:32px;top:1010.4px;width:48px;height:2px;background:#3f3f46;"></div>
<div style="left:88px;top:1010.4px;width:78px;height:2px;background:#3f3f46;"></div>
<div style="left:0px;top:1014px;width:1920px;height:26px;background:#007acc;"></div>
<span class="t" style="left:4px;top:1018.1px;letter-spacing:-1.01px;">就绪</span>
<div style="left:0;top:1039.5px;width:1920px;height:9px;background:linear-gradient(#b8d0b8 0,#5f9a6c 2px,#4a8658 100%);"></div>
<div style="left:0px;top:1040px;width:59px;height:8px;background:#3d6f48;"></div>
<div style="left:14px;top:1042px;width:26px;height:14px;border-radius:50%;background:#cfdccf;"></div>
<div style="left:60px;top:1040px;width:76px;height:9px;background:linear-gradient(#dbe8d6 0,#a3b99f 2.5px,#8fa88c 100%);box-shadow:0 0 0 1px #4b6b50;"></div>
<div style="left:72px;top:1043px;width:16px;height:6px;background:#e8dc9a;border-radius:3px 3px 0 0;"></div>
<div style="left:138px;top:1040px;width:78px;height:9px;background:linear-gradient(#dbe8d6 0,#a3b99f 2.5px,#8fa88c 100%);box-shadow:0 0 0 1px #4b6b50;"></div>
<div style="left:150px;top:1043px;width:16px;height:6px;background:#e8dc9a;border-radius:3px 3px 0 0;"></div>
<div style="left:218px;top:1040px;width:78px;height:9px;background:linear-gradient(#dbe8d6 0,#a3b99f 2.5px,#8fa88c 100%);box-shadow:0 0 0 1px #4b6b50;"></div>
<div style="left:230px;top:1043px;width:16px;height:6px;background:#e8dc9a;border-radius:3px 3px 0 0;"></div>
<div style="left:298px;top:1040px;width:76px;height:9px;background:linear-gradient(#dbe8d6 0,#a3b99f 2.5px,#8fa88c 100%);box-shadow:0 0 0 1px #4b6b50;"></div>
<div style="left:310px;top:1043px;width:16px;height:6px;background:#e8dc9a;border-radius:3px 3px 0 0;"></div>
<div style="left:376px;top:1040px;width:84px;height:9px;background:linear-gradient(#dbe8d6 0,#a3b99f 2.5px,#8fa88c 100%);box-shadow:0 0 0 1px #4b6b50;"></div>
<div style="left:388px;top:1043px;width:16px;height:6px;background:#e8dc9a;border-radius:3px 3px 0 0;"></div>
<div style="left:462px;top:1040px;width:80px;height:9px;background:linear-gradient(#dbe8d6 0,#a3b99f 2.5px,#8fa88c 100%);box-shadow:0 0 0 1px #4b6b50;"></div>
<div style="left:474px;top:1043px;width:16px;height:6px;background:#e8dc9a;border-radius:3px 3px 0 0;"></div>
<div style="left:544px;top:1040px;width:78px;height:9px;background:linear-gradient(#dbe8d6 0,#a3b99f 2.5px,#8fa88c 100%);box-shadow:0 0 0 1px #4b6b50;"></div>
<div style="left:556px;top:1043px;width:16px;height:6px;background:#e8dc9a;border-radius:3px 3px 0 0;"></div>
<div style="left:624px;top:1040px;width:78px;height:9px;background:linear-gradient(#dbe8d6 0,#a3b99f 2.5px,#8fa88c 100%);box-shadow:0 0 0 1px #4b6b50;"></div>
<div style="left:636px;top:1043px;width:16px;height:6px;background:#e8dc9a;border-radius:3px 3px 0 0;"></div>
<div style="left:976px;top:1040px;width:76px;height:9px;background:linear-gradient(#dbe8d6 0,#a3b99f 2.5px,#8fa88c 100%);box-shadow:0 0 0 1px #4b6b50;"></div>
<div style="left:988px;top:1043px;width:16px;height:6px;background:#7a4a9a;border-radius:3px 3px 0 0;"></div>
<div style="left:1054px;top:1040px;width:76px;height:9px;background:linear-gradient(#dbe8d6 0,#a3b99f 2.5px,#8fa88c 100%);box-shadow:0 0 0 1px #4b6b50;"></div>
<div style="left:1066px;top:1043px;width:16px;height:6px;background:#7a4a9a;border-radius:3px 3px 0 0;"></div>
<div style="left:1348px;top:1040px;width:74px;height:9px;background:linear-gradient(#dbe8d6 0,#a3b99f 2.5px,#8fa88c 100%);box-shadow:0 0 0 1px #4b6b50;"></div>
<div style="left:1360px;top:1043px;width:16px;height:6px;background:#e8dc9a;border-radius:3px 3px 0 0;"></div>
<div style="left:1426px;top:1040px;width:78px;height:9px;background:linear-gradient(#dbe8d6 0,#a3b99f 2.5px,#8fa88c 100%);box-shadow:0 0 0 1px #4b6b50;"></div>
<div style="left:1438px;top:1043px;width:16px;height:6px;background:#e8dc9a;border-radius:3px 3px 0 0;"></div>
<div style="left:728px;top:1043px;width:14px;height:6px;background:#c9584a;border-radius:2px 2px 0 0;"></div>
<div style="left:776px;top:1043px;width:14px;height:6px;background:#4a7ac9;border-radius:2px 2px 0 0;"></div>
<div style="left:828px;top:1043px;width:14px;height:6px;background:#f4f4f4;border-radius:2px 2px 0 0;"></div>
<div style="left:888px;top:1043px;width:14px;height:6px;background:#5a9ae0;border-radius:2px 2px 0 0;"></div>
<div style="left:1154px;top:1043px;width:14px;height:6px;background:#2a5aa0;border-radius:2px 2px 0 0;"></div>
<div style="left:1208px;top:1043px;width:14px;height:6px;background:#6ac0d0;border-radius:2px 2px 0 0;"></div>
<div style="left:1268px;top:1043px;width:14px;height:6px;background:#e8c86a;border-radius:2px 2px 0 0;"></div>
<div style="left:1312px;top:1043px;width:14px;height:6px;background:#e8d8a0;border-radius:2px 2px 0 0;"></div>
<span class="t" style="left:1824px;top:1039.5px;color:#e8f0e8;font-size:11px;line-height:15px;letter-spacing:4.09px;">14:12</span>
<div style="left:1908px;top:1040.6px;width:12px;height:7.4px;background:#9ab89a;"></div>
</div></body></html>
